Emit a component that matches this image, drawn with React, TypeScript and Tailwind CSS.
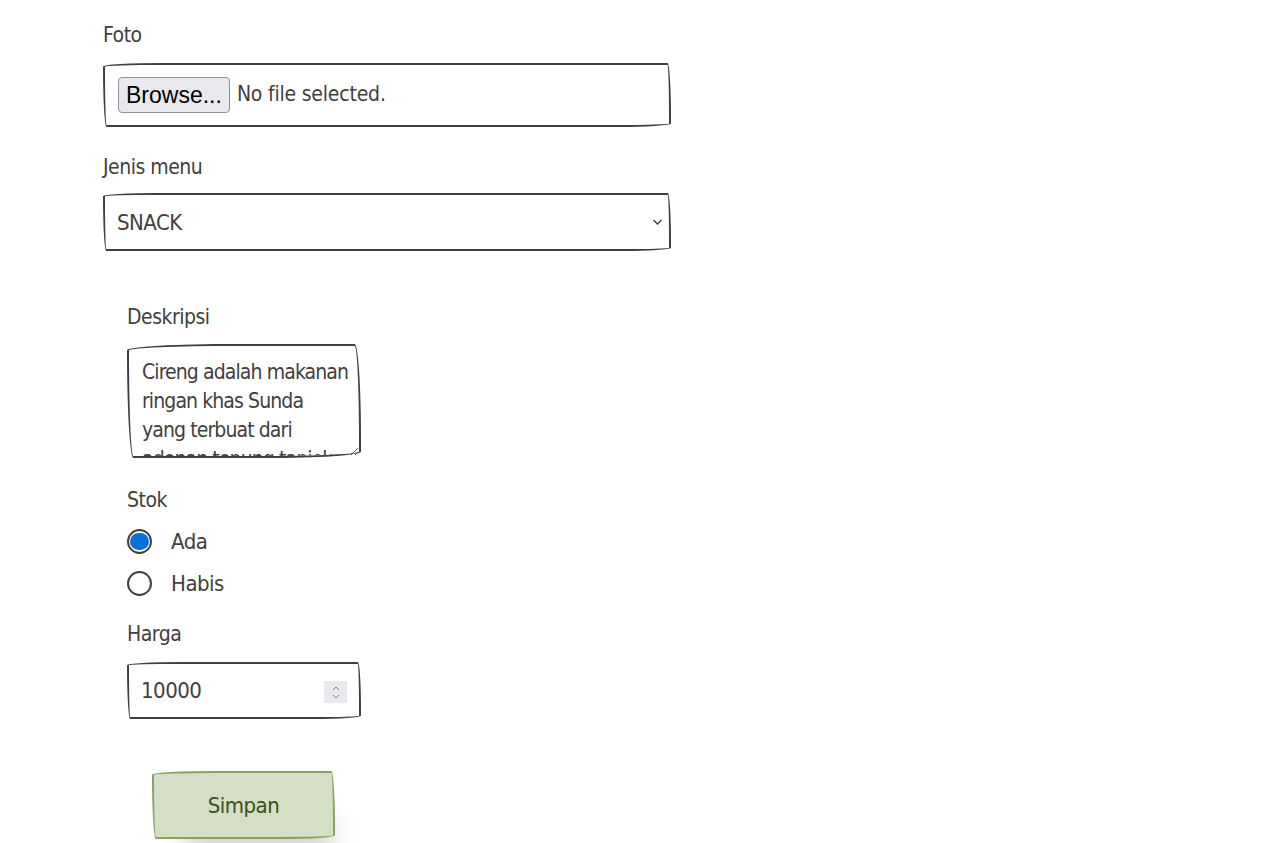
import { useState } from "react"

const wobbly = "rounded-[255px_15px_225px_15px/15px_225px_15px_255px]"
const font = "font-['Liberation_Sans_Narrow','DejaVu_Sans_Condensed',Roboto,sans-serif] tracking-[-0.5px]"

const deskripsi =
  "Cireng adalah makanan ringan khas Sunda yang terbuat dari adonan tepung tapioka yang digoreng hingga renyah, biasanya disajikan dengan sambal rujak."

const Radio = ({ checked, label, onClick }: { checked: boolean; label: string; onClick: () => void }) => (
  <label className="flex items-center h-[42px] cursor-pointer" onClick={onClick}>
    <span className="w-[25px] h-[25px] rounded-full border-2 border-[#41403e] flex items-center justify-center">
      {checked && <span className="w-[19px] h-[17px] rounded-full bg-[#0a6fd6]" />}
    </span>
    <span className="ml-[19px] text-[22px]">{label}</span>
  </label>
)

const App = () => {
  const [stok, setStok] = useState("ada")
  return (
    <div className={`min-h-[843px] bg-white text-[#41403e] ${font} pl-[103px] pt-[20px]`}>
      <div className="w-[568px]">
        <div className="text-[21px] leading-[30px]">Foto</div>
        <div className={`mt-[13px] h-[64px] border-2 border-[#41403e] ${wobbly} flex items-center px-[13px]`}>
          <button className="h-[36px] px-[7px] bg-[#e9e9ed] border border-[#8f8f9d] rounded-[4px] text-black text-[23px] tracking-normal font-['Liberation_Sans',Arial,sans-serif] leading-none">
            Browse...
          </button>
          <span className="ml-[7px] text-[21px] tracking-[-0.2px]">No file selected.</span>
        </div>

        <div className="mt-[25px] text-[21px] leading-[30px]">Jenis menu</div>
        <div className={`relative mt-[11px] h-[58px] border-2 border-[#41403e] ${wobbly}`}>
          <select className="appearance-none w-full h-full bg-transparent px-[12px] text-[22px] outline-none">
            <option>SNACK</option>
            <option>MAKANAN</option>
            <option>MINUMAN</option>
          </select>
          <svg className="absolute right-[6px] top-[22px] pointer-events-none" width="11" height="9" viewBox="0 0 11 9">
            <path d="M1.5 3 L5.5 7 L9.5 3" fill="none" stroke="#41403e" strokeWidth="1.4" />
          </svg>
        </div>
      </div>

      <div className="pl-[24px] mt-[51px] w-[234px] box-content">
        <div className="text-[21px] leading-[30px]">Deskripsi</div>
        <textarea
          className={`mt-[12px] w-[234px] h-[114px] border-2 border-[#41403e] ${wobbly} pl-[13px] pr-[9px] pt-[12px] text-[21px] tracking-[-0.9px] leading-[29px] resize-y outline-none overflow-hidden`}
          defaultValue={deskripsi}
        />

        <div className="mt-[20px] text-[21px] leading-[30px]">Stok</div>
        <div className="mt-[5px]">
          <Radio checked={stok === "ada"} label="Ada" onClick={() => setStok("ada")} />
          <Radio checked={stok === "habis"} label="Habis" onClick={() => setStok("habis")} />
        </div>

        <div className="mt-[15px] text-[21px] leading-[30px]">Harga</div>
        <div className={`relative mt-[13px] h-[57px] border-2 border-[#41403e] ${wobbly}`}>
          <input
            type="number"
            defaultValue={10000}
            className="w-full h-full bg-transparent px-[12px] text-[22px] outline-none [appearance:textfield] [&::-webkit-inner-spin-button]:appearance-none"
          />
          <div className="absolute right-[12px] top-[17px] w-[23px] h-[22px] bg-[#e9e9ed] flex flex-col items-center justify-center gap-[3px] pointer-events-none">
            <svg width="8" height="5" viewBox="0 0 8 5">
              <path d="M1 4 L4 1 L7 4" fill="none" stroke="#7a7a80" strokeWidth="1" />
            </svg>
            <svg width="8" height="5" viewBox="0 0 8 5">
              <path d="M1 1 L4 4 L7 1" fill="none" stroke="#7a7a80" strokeWidth="1" />
            </svg>
          </div>
        </div>

        <div className="pl-[25px] mt-[52px]">
          <button
            className={`w-[183px] h-[68px] bg-[#d4dfc5] border-2 border-[#86a361] ${wobbly} text-[22px] text-[#3d5020] shadow-[15px_28px_25px_-18px_rgba(0,0,0,0.2)]`}
          >
            Simpan
          </button>
        </div>
      </div>
    </div>
  )
}

export default App
